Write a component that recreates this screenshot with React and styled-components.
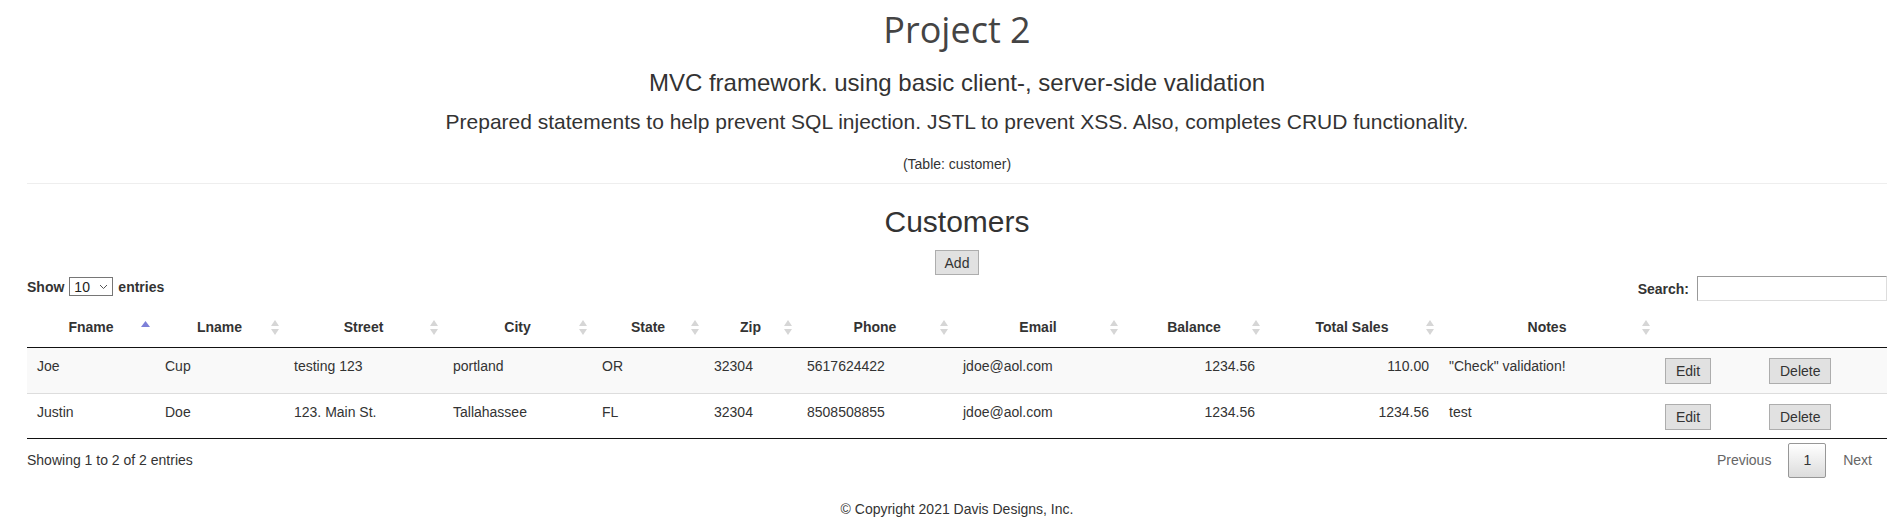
import styled, { createGlobalStyle } from "styled-components"

const GlobalStyle = createGlobalStyle`
    body {
        margin: 0;
        font-family: "Liberation Sans", Arial, sans-serif;
        font-size: 14px;
        line-height: 20px;
        color: #333;
        background: #fff;
    }
`

const columns = [
    { title: "Fname", width: 128, sort: "asc" },
    { title: "Lname", width: 129, sort: "both" },
    { title: "Street", width: 159, sort: "both" },
    { title: "City", width: 149, sort: "both" },
    { title: "State", width: 112, sort: "both" },
    { title: "Zip", width: 93, sort: "both" },
    { title: "Phone", width: 156, sort: "both" },
    { title: "Email", width: 170, sort: "both" },
    { title: "Balance", width: 142, sort: "both" },
    { title: "Total Sales", width: 174, sort: "both" },
    { title: "Notes", width: 216, sort: "both" },
    { title: "", width: 104 },
    { title: "", width: 128 },
]

const customers = [
    ["Joe", "Cup", "testing 123", "portland", "OR", "32304", "5617624422", "jdoe@aol.com", "1234.56", "110.00", "\"Check\" validation!"],
    ["Justin", "Doe", "123. Main St.", "Tallahassee", "FL", "32304", "8508508855", "jdoe@aol.com", "1234.56", "1234.56", "test"],
]

function SortIcon({ dir }) {
    if (dir === "asc") {
        return (
            <Sort width="9" height="15" viewBox="0 0 9 15">
                <path d="M4.5 1 L9 7 H0 Z" fill="#7d80d8" />
            </Sort>
        )
    }
    return (
        <Sort width="8" height="15" viewBox="0 0 8 15">
            <path d="M4 0 L8 6 H0 Z" fill="#d6d6d6" />
            <path d="M0 9 H8 L4 15 Z" fill="#d6d6d6" />
        </Sort>
    )
}

export default function App() {
    return (
        <Page>
            <GlobalStyle />
            <Header>
                <Title>Project 2</Title>
                <Subtitle>MVC framework. using basic client-, server-side validation</Subtitle>
                <Lead>Prepared statements to help prevent SQL injection. JSTL to prevent XSS. Also, completes CRUD functionality.</Lead>
                <Note>(Table: customer)</Note>
            </Header>
            <Rule />

            <SectionTitle>Customers</SectionTitle>
            <AddButton>Add</AddButton>

            <Toolbar>
                <Length>
                    Show
                    <SelectBox>
                        10
                        <svg width="9" height="6" viewBox="0 0 9 6">
                            <path d="M1 1 L4.5 4.5 L8 1" fill="none" stroke="#555" strokeWidth="1" />
                        </svg>
                    </SelectBox>
                    entries
                </Length>
                <Filter>
                    Search:
                    <SearchInput type="search" />
                </Filter>
            </Toolbar>

            <Table>
                <colgroup>
                    {columns.map((c, i) => <col key={i} width={c.width} />)}
                </colgroup>
                <thead>
                    <tr>
                        {columns.map((c, i) => (
                            <Th key={i}>
                                {c.title}
                                {c.sort && <SortIcon dir={c.sort} />}
                            </Th>
                        ))}
                    </tr>
                </thead>
                <tbody>
                    {customers.map((row, r) => (
                        <Row key={r}>
                            {row.map((v, i) => (
                                <Td key={i} $right={i === 8 || i === 9}>{v}</Td>
                            ))}
                            <Td><SmallButton>Edit</SmallButton></Td>
                            <Td><SmallButton>Delete</SmallButton></Td>
                        </Row>
                    ))}
                </tbody>
            </Table>

            <TableFooter>
                <Info>Showing 1 to 2 of 2 entries</Info>
                <Pager>
                    <PageButton>Previous</PageButton>
                    <PageButton $current>1</PageButton>
                    <PageButton>Next</PageButton>
                </Pager>
            </TableFooter>

            <Copyright>© Copyright 2021 Davis Designs, Inc.</Copyright>
        </Page>
    )
}

const Page = styled.div`
    padding: 10px 4px 2px 27px;
`
const Header = styled.div`
    text-align: center;
`
const Title = styled.h1`
    margin: 0;
    font-family: "Open Sans", sans-serif;
    font-size: 36px;
    line-height: 40px;
    font-weight: 400;
    color: #444;
`
const Subtitle = styled.h3`
    margin: 18px 0 0;
    font-size: 24px;
    line-height: 30px;
    font-weight: 400;
`
const Lead = styled.p`
    margin: 11px 0 0;
    font-size: 21px;
    line-height: 26px;
`
const Note = styled.p`
    margin: 19px 0 0;
`
const Rule = styled.hr`
    margin: 9px 0 0;
    border: 0;
    border-top: 1px solid #eee;
`
const SectionTitle = styled.h2`
    margin: 21px 0 0;
    text-align: center;
    font-size: 30px;
    line-height: 34px;
    font-weight: 400;
`
const buttonBase = `
    font-family: "Liberation Sans", Arial, sans-serif;
    font-size: 14px;
    color: #333;
    background: #e1e1e1;
    border: 1px solid #adadad;
    border-radius: 0;
    padding: 0 9px;
`
const AddButton = styled.button`
    ${buttonBase}
    display: block;
    height: 25px;
    margin: 11px auto 0;
`
const Toolbar = styled.div`
    display: flex;
    justify-content: space-between;
    align-items: flex-start;
    height: 25px;
    margin-top: 1px;
    font-weight: bold;
`
const Length = styled.label`
    display: flex;
    align-items: center;
    gap: 5px;
    height: 19px;
    margin-top: 1px;
`
const SelectBox = styled.span`
    display: inline-flex;
    align-items: center;
    justify-content: space-between;
    box-sizing: border-box;
    width: 44px;
    height: 19px;
    padding: 0 4px 0 4px;
    border: 1px solid #767676;
    font-weight: normal;
    color: #222;
`
const Filter = styled.label`
    display: flex;
    align-items: center;
    gap: 8px;
    height: 25px;
`
const SearchInput = styled.input`
    box-sizing: border-box;
    width: 190px;
    height: 25px;
    margin: 0;
    border: 1px solid;
    border-color: #999 #ddd #ddd #999;
    outline: none;
`
const Table = styled.table`
    width: 100%;
    margin-top: 6px;
    table-layout: fixed;
    border-collapse: separate;
    border-spacing: 0;
`
const Th = styled.th`
    position: relative;
    padding: 10px 18px;
    line-height: 20px;
    text-align: center;
    font-weight: bold;
    border-bottom: 1px solid #111;
    white-space: nowrap;
`
const Sort = styled.svg`
    position: absolute;
    right: 5px;
    top: 13px;
`
const Row = styled.tr`
    &:nth-child(odd) {
        background: #f9f9f9;
    }
    & + & td {
        border-top: 1px solid #ddd;
        padding-bottom: 8px;
    }
    &:last-child td {
        border-bottom: 1px solid #111;
    }
`
const Td = styled.td`
    padding: 8px 10px 9px;
    vertical-align: top;
    text-align: ${p => (p.$right ? "right" : "left")};
    white-space: nowrap;
`
const SmallButton = styled.button`
    ${buttonBase}
    display: block;
    height: 26px;
    margin-top: 2px;
    padding: 0 10px;
`
const TableFooter = styled.div`
    display: flex;
    justify-content: space-between;
    align-items: flex-start;
`
const Info = styled.div`
    margin-top: 11px;
`
const Pager = styled.div`
    display: flex;
    margin-top: 4px;
`
const PageButton = styled.span`
    padding: 7px 14px;
    line-height: 19px;
    margin-left: 2px;
    border: 1px solid ${p => (p.$current ? "#979797" : "transparent")};
    color: ${p => (p.$current ? "#333" : "#666")};
    background: ${p => (p.$current ? "linear-gradient(to bottom, #fff 0%, #dcdcdc 100%)" : "transparent")};
    border-radius: 2px;
`
const Copyright = styled.div`
    margin-top: 21px;
    text-align: center;
`
